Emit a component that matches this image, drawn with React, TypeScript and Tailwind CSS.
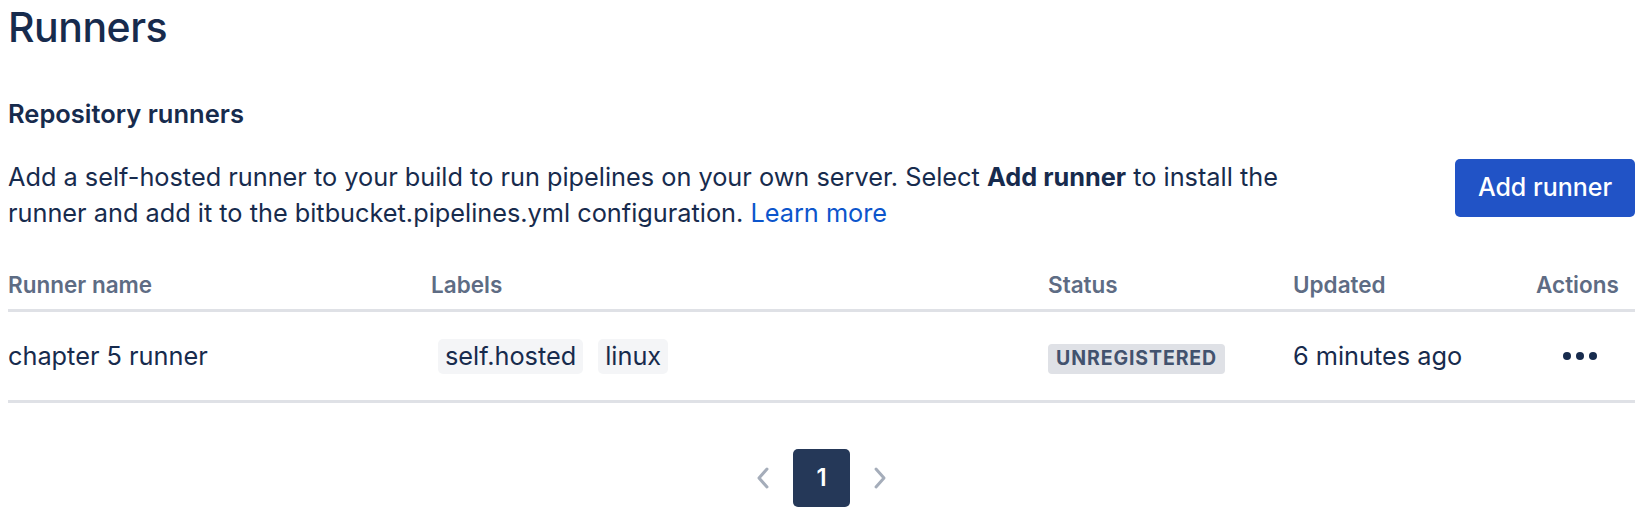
import React from "react";

const font = { fontFamily: "Inter, 'Noto Sans', sans-serif" };

function Chevron({ dir }: { dir: "left" | "right" }) {
  return (
    <svg width="16" height="26" viewBox="0 0 16 26" fill="none">
      {dir === "left" ? (
        <polyline points="12,4 4,13 12,22" stroke="#a5adba" strokeWidth="3" strokeLinecap="round" strokeLinejoin="round" />
      ) : (
        <polyline points="4,4 12,13 4,22" stroke="#a5adba" strokeWidth="3" strokeLinecap="round" strokeLinejoin="round" />
      )}
    </svg>
  );
}

export default function App() {
  return (
    <div className="w-[1639px] h-[518px] bg-white text-[#172b4d] overflow-hidden" style={font}>
      <div className="pl-[8px] pr-[4px]">
        <h1 className="mt-[3px] text-[41px] leading-[48px] font-medium tracking-[-0.5px] text-[#172b4d]">Runners</h1>
        <h2 className="mt-[49px] text-[25.5px] leading-[28px] font-semibold text-[#172b4d]">Repository runners</h2>
        <div className="mt-[31px] flex items-start justify-between">
          <p className="w-[1290px] text-[25.3px] leading-[36px] text-[#172b4d]">
            Add a self-hosted runner to your build to run pipelines on your own server. Select{" "}
            <span className="font-bold">Add runner</span> to install the runner and add it to the bitbucket.pipelines.yml configuration.{" "}
            <a className="text-[#0c55cc]">Learn more</a>
          </p>
          <button className="w-[180px] h-[58px] rounded-[5px] bg-[#2153c6] text-white text-[25px] font-medium">
            Add runner
          </button>
        </div>

        <div className="mt-[40px] w-[1627px]">
          <div className="grid grid-cols-[423px_617px_245px_1fr_auto] border-b-[3px] border-[#dfe1e6] pb-[10px] text-[22.5px] leading-[28px] font-semibold text-[#5e6c84]">
            <div>Runner name</div>
            <div>Labels</div>
            <div>Status</div>
            <div>Updated</div>
            <div className="w-[80px] mr-[19px] text-right">Actions</div>
          </div>
          <div className="grid grid-cols-[423px_617px_245px_1fr_auto] items-center h-[91px] border-b-[3px] border-[#dfe1e6] text-[25.3px]">
            <div>chapter 5 runner</div>
            <div className="flex items-center gap-[15px] pl-[7px]">
              <span className="h-[35px] px-[7px] flex items-center rounded-[5px] bg-[#f4f5f7]">self.hosted</span>
              <span className="h-[35px] px-[7px] flex items-center rounded-[5px] bg-[#f4f5f7]">linux</span>
            </div>
            <div>
              <span className="inline-flex items-center h-[30px] px-[8px] rounded-[4px] bg-[#dfe1e6] text-[19.5px] font-bold tracking-[0.9px] text-[#42526e] uppercase">
                Unregistered
              </span>
            </div>
            <div>6 minutes ago</div>
            <div className="w-[80px] mr-[17px] flex justify-center gap-[5px] pl-[4px]">
              <span className="w-[8px] h-[8px] rounded-full bg-[#172b4d]" />
              <span className="w-[8px] h-[8px] rounded-full bg-[#172b4d]" />
              <span className="w-[8px] h-[8px] rounded-full bg-[#172b4d]" />
            </div>
          </div>
        </div>

        <div className="mt-[46px] flex items-center justify-center gap-[22px]">
          <Chevron dir="left" />
          <div className="w-[57px] h-[58px] rounded-[5px] bg-[#253858] text-white text-[24px] font-semibold flex items-center justify-center">
            1
          </div>
          <Chevron dir="right" />
        </div>
      </div>
    </div>
  );
}
